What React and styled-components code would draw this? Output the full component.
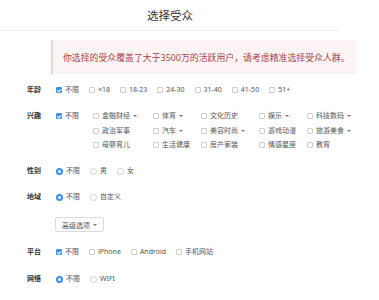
import React from "react";
import styled, { createGlobalStyle } from "styled-components";

const GlobalStyle = createGlobalStyle`
  body {
    margin: 0;
    background: #fff;
    font-family: "Noto Sans", "Noto Sans CJK SC", sans-serif;
    color: #333;
  }
`;

const Page = styled.div`
  width: 379px;
  height: 300px;
  overflow: hidden;
  background: #fff;
`;

const Header = styled.header`
  width: 340px;
  height: 31px;
  box-sizing: border-box;
  padding-top: 9px;
  border-bottom: 1px solid #f1f1f1;
  text-align: center;
`;

const Title = styled.h1`
  margin: 0;
  font-size: 11.5px;
  line-height: 14px;
  font-weight: 400;
  color: #333;
`;

const Alert = styled.div`
  margin: 9px 0 0 51px;
  width: 305px;
  height: 34px;
  box-sizing: border-box;
  padding-left: 10px;
  display: flex;
  align-items: center;
  background: #fcf4f4;
  border-left: 2px solid #e9d3d3;
  color: #a8434a;
  font-size: 8.9px;
`;

const Form = styled.div`
  margin-top: 9px;
  padding-left: 27px;
  display: flex;
  flex-direction: column;
  gap: 12px;
`;

const Row = styled.div`
  display: flex;
  align-items: flex-start;
  line-height: 14px;
  margin-top: ${(p) => p.$extra || 0}px;
`;

const Label = styled.div`
  width: 29px;
  flex: none;
  font-size: 7px;
  font-weight: 700;
  color: #333;
`;

const Options = styled.div`
  display: flex;
  align-items: flex-start;
`;

const Item = styled.label`
  display: inline-flex;
  align-items: center;
  gap: 3px;
  margin-right: 10px;
  height: 14px;
  font-size: 7px;
  color: #555;
  white-space: nowrap;
`;

const Box = styled.span`
  width: 6px;
  height: 6px;
  box-sizing: border-box;
  border-radius: 1px;
  position: relative;
  border: 1px solid ${(p) => (p.$on ? "#3a8ee6" : "#cfcfcf")};
  background: ${(p) => (p.$on ? "#3a8ee6" : "#fff")};
  &::after {
    content: "";
    display: ${(p) => (p.$on ? "block" : "none")};
    position: absolute;
    left: 1px;
    top: 0px;
    width: 1.5px;
    height: 2.5px;
    border-right: 1px solid #fff;
    border-bottom: 1px solid #fff;
    transform: rotate(45deg);
  }
`;

const Dot = styled.span`
  width: 7px;
  height: 7px;
  box-sizing: border-box;
  border-radius: 50%;
  border: ${(p) => (p.$on ? "2px solid #3a8ee6" : "1px solid #d2d2d2")};
  background: #fff;
`;

const Caret = styled.span`
  display: inline-block;
  margin-left: 3px;
  width: 0;
  height: 0;
  border-left: 2px solid transparent;
  border-right: 2px solid transparent;
  border-top: 2px solid #777;
  vertical-align: middle;
`;

const Grid = styled.div`
  display: grid;
  grid-template-columns: 60px 48px 58px 48px auto;
  row-gap: 0.5px;
  margin-left: 4px;
  & > label {
    margin-right: 0;
  }
`;

const Button = styled.button`
  margin-left: 28px;
  height: 15px;
  padding: 0 6px;
  display: inline-flex;
  align-items: center;
  border: 1px solid #dcdcdc;
  border-radius: 2px;
  background: #fff;
  font-family: inherit;
  font-size: 7px;
  color: #555;
`;

const Check = ({ on, children, caret }) => (
  <Item>
    <Box $on={on} />
    <span>
      {children}
      {caret && <Caret />}
    </span>
  </Item>
);

const Radio = ({ on, children }) => (
  <Item>
    <Dot $on={on} />
    <span>{children}</span>
  </Item>
);

const interests = [
  ["金融财经", true],
  ["体育", true],
  ["文化历史", false],
  ["娱乐", true],
  ["科技数码", true],
  ["政治军事", false],
  ["汽车", true],
  ["美容时尚", true],
  ["游戏动漫", false],
  ["旅游美食", true],
  ["母婴育儿", false],
  ["生活健康", false],
  ["房产家装", false],
  ["情感星座", false],
  ["教育", false],
];

export default function App() {
  return (
    <Page>
      <GlobalStyle />
      <Header>
        <Title>选择受众</Title>
      </Header>
      <Alert>你选择的受众覆盖了大于3500万的活跃用户，请考虑精准选择受众人群。</Alert>
      <Form>
        <Row>
          <Label>年龄</Label>
          <Options>
            <Check on>不限</Check>
            {["<18", "18-23", "24-30", "31-40", "41-50", "51+"].map((a) => (
              <Check key={a}>{a}</Check>
            ))}
          </Options>
        </Row>
        <Row>
          <Label>兴趣</Label>
          <Options>
            <Check on>不限</Check>
            <Grid>
              {interests.map(([name, caret]) => (
                <Check key={name} caret={caret}>
                  {name}
                </Check>
              ))}
            </Grid>
          </Options>
        </Row>
        <Row>
          <Label>性别</Label>
          <Options>
            <Radio on>不限</Radio>
            <Radio>男</Radio>
            <Radio>女</Radio>
          </Options>
        </Row>
        <Row>
          <Label>地域</Label>
          <Options>
            <Radio on>不限</Radio>
            <Radio>自定义</Radio>
          </Options>
        </Row>
        <Row $extra={1}>
          <Button>
            高级选项
            <Caret />
          </Button>
        </Row>
        <Row $extra={1}>
          <Label>平台</Label>
          <Options>
            <Check on>不限</Check>
            <Check>iPhone</Check>
            <Check>Android</Check>
            <Check>手机网站</Check>
          </Options>
        </Row>
        <Row $extra={1}>
          <Label>网络</Label>
          <Options>
            <Radio on>不限</Radio>
            <Radio>WIFI</Radio>
          </Options>
        </Row>
      </Form>
    </Page>
  );
}
